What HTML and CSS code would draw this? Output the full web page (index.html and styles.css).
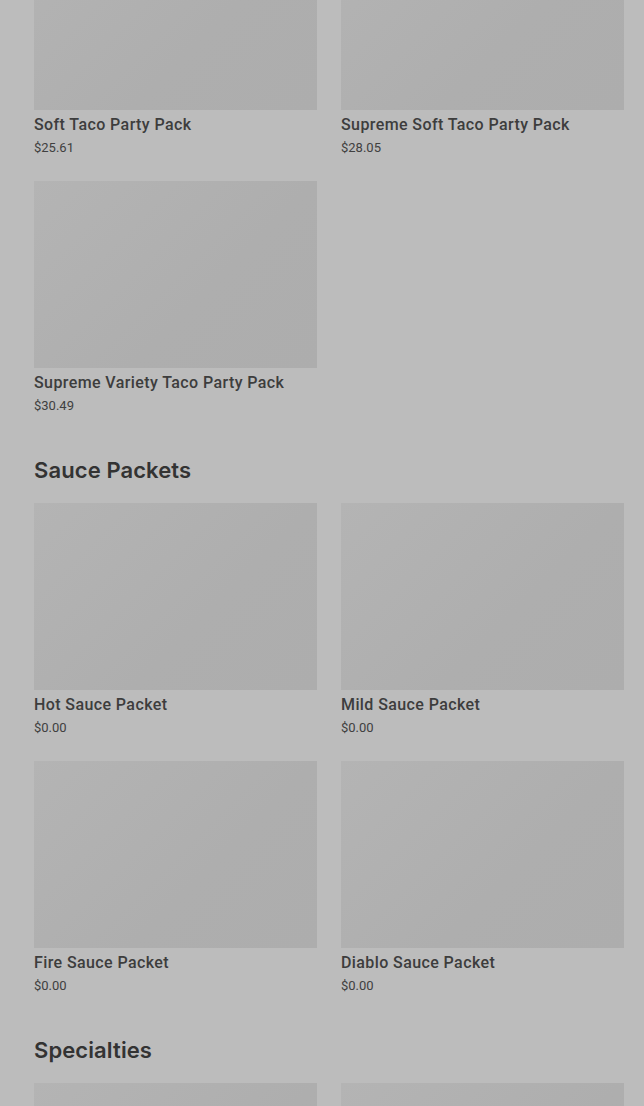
FILE: index.html
```html
<!DOCTYPE html>
<html lang="en">
<head>
    <meta charset="UTF-8">
    <meta name="viewport" content="width=device-width, initial-scale=1.0">
    <title>Menu</title>
    <link rel="stylesheet" href="styles.css">
</head>
<body>
    <div class="backdrop">
        <div class="menu">
            <section class="section section-first">
                <div class="grid">
                    <div class="card">
                        <div class="card-image"></div>
                        <div class="card-title">Soft Taco Party Pack</div>
                        <div class="card-price">$25.61</div>
                    </div>
                    <div class="card">
                        <div class="card-image"></div>
                        <div class="card-title">Supreme Soft Taco Party Pack</div>
                        <div class="card-price">$28.05</div>
                    </div>
                    <div class="card">
                        <div class="card-image"></div>
                        <div class="card-title">Supreme Variety Taco Party Pack</div>
                        <div class="card-price">$30.49</div>
                    </div>
                </div>
            </section>

            <section class="section">
                <h2 class="section-title">Sauce Packets</h2>
                <div class="grid">
                    <div class="card">
                        <div class="card-image"></div>
                        <div class="card-title">Hot Sauce Packet</div>
                        <div class="card-price">$0.00</div>
                    </div>
                    <div class="card">
                        <div class="card-image"></div>
                        <div class="card-title">Mild Sauce Packet</div>
                        <div class="card-price">$0.00</div>
                    </div>
                    <div class="card">
                        <div class="card-image"></div>
                        <div class="card-title">Fire Sauce Packet</div>
                        <div class="card-price">$0.00</div>
                    </div>
                    <div class="card">
                        <div class="card-image"></div>
                        <div class="card-title">Diablo Sauce Packet</div>
                        <div class="card-price">$0.00</div>
                    </div>
                </div>
            </section>

            <section class="section">
                <h2 class="section-title">Specialties</h2>
                <div class="grid">
                    <div class="card">
                        <div class="card-image"></div>
                    </div>
                    <div class="card">
                        <div class="card-image"></div>
                    </div>
                </div>
            </section>
        </div>
    </div>
</body>
</html>
```

FILE: styles.css
```css
html, body {
    margin: 0;
    padding: 0;
    background-color: #bcbcbc;
    overflow: hidden;
}
body {
    font-family: Roboto, 'Liberation Sans', sans-serif;
    color: #3b3b3b;
}
.backdrop {
    height: 1106px;
    overflow: hidden;
}
.menu {
    padding: 0 20px 0 34px;
    margin-top: -77px;
}
.section {
    margin-top: 41px;
}
.section-first {
    margin-top: 0;
}
.section-title {
    font-family: Inter, 'Noto Sans', sans-serif;
    font-size: 22px;
    line-height: 28px;
    font-weight: 600;
    letter-spacing: 0.1px;
    color: #333;
    margin: 0 0 19px 0;
}
.grid {
    display: grid;
    grid-template-columns: 1fr 1fr;
    column-gap: 24px;
    row-gap: 24px;
}
.card-image {
    height: 187px;
    background: linear-gradient(135deg, #b4b4b4 0%, #aeaeae 60%, #adadad 100%);
}
.card-title {
    margin-top: 5px;
    font-size: 16px;
    line-height: 20px;
    font-weight: 500;
    letter-spacing: 0.4px;
    color: #3d3d3d;
}
.card-price {
    margin-top: 4px;
    font-size: 13px;
    line-height: 18px;
    color: #404040;
}
```
